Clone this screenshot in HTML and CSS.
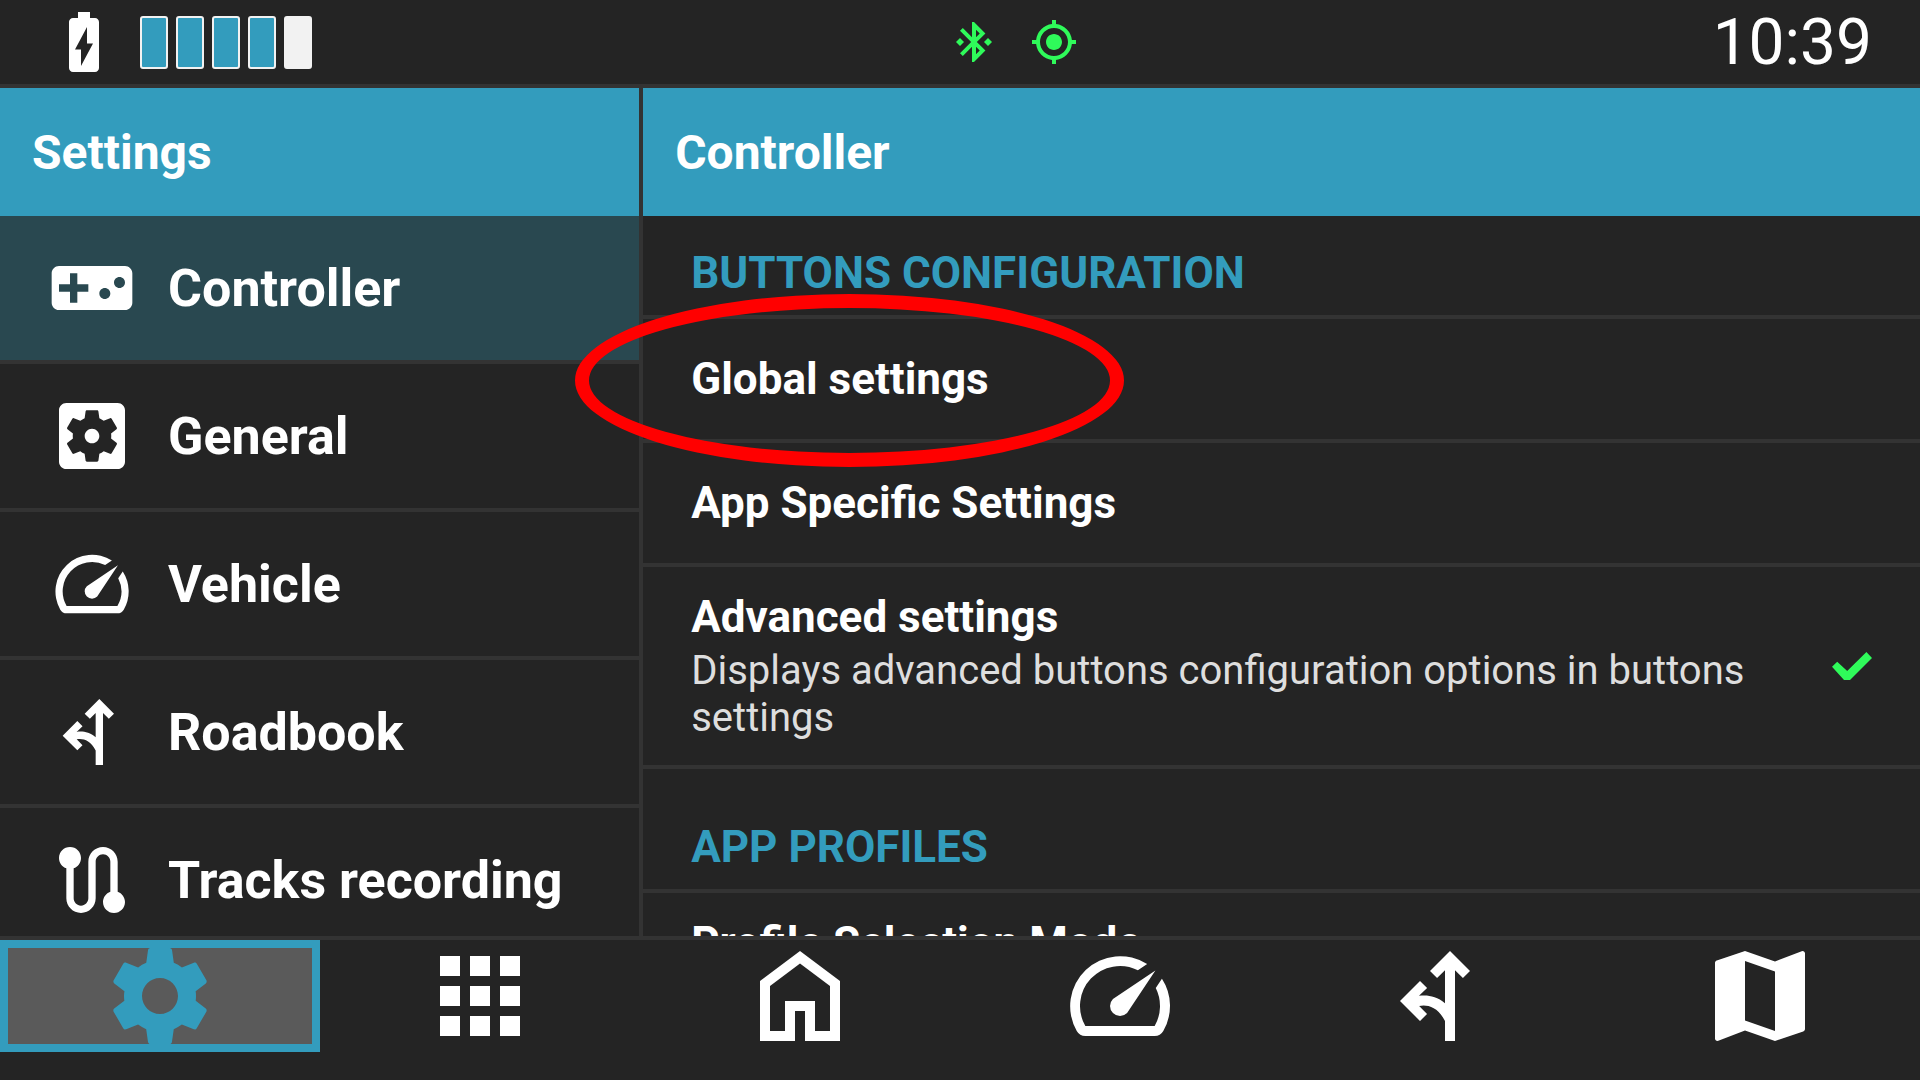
FILE: index.html
```
<!DOCTYPE html>
<html lang="en">

<head>
    <meta charset="UTF-8">
    <meta name="viewport" content="width=device-width, initial-scale=1.0">
    <title>Settings</title>
    <link rel="stylesheet" href="styles.css">
</head>

<body>
    <header class="status">
        <div class="status_left">
            <svg class="icon_battery" viewBox="0 0 24 24"><path d="M15.67 4H14V2h-4v2H8.33C7.6 4 7 4.6 7 5.33v15.33C7 21.4 7.6 22 8.33 22h7.33c.74 0 1.34-.6 1.34-1.33V5.33C17 4.6 16.4 4 15.67 4zM11 20v-5.5H9L13 7v5.5h2L11 20z"/></svg>
            <div class="level">
                <span class="on"></span>
                <span class="on"></span>
                <span class="on"></span>
                <span class="on"></span>
                <span></span>
            </div>
        </div>
        <div class="status_mid">
            <svg viewBox="0 0 24 24"><path d="M7 12l-2-2-2 2 2 2 2-2zm10.71-4.29L12 2h-1v7.59L6.41 5 5 6.41 10.59 12 5 17.59 6.41 19 11 14.41V22h1l5.71-5.71-4.3-4.29 4.3-4.29zM13 5.83l1.88 1.88L13 9.59V5.83zm1.88 10.46L13 18.17v-3.76l1.88 1.88zM19 10l-2 2 2 2 2-2-2-2z"/></svg>
            <svg viewBox="0 0 24 24"><path d="M12 8c-2.21 0-4 1.79-4 4s1.79 4 4 4 4-1.79 4-4-1.79-4-4-4zm8.94 3A8.994 8.994 0 0 0 13 3.06V1h-2v2.06A8.994 8.994 0 0 0 3.06 11H1v2h2.06A8.994 8.994 0 0 0 11 20.94V23h2v-2.06A8.994 8.994 0 0 0 20.94 13H23v-2h-2.06zM12 19c-3.87 0-7-3.13-7-7s3.13-7 7-7 7 3.13 7 7-3.13 7-7 7z"/></svg>
        </div>
        <div class="time">10:39</div>
    </header>

    <div class="container">
        <aside class="side">
            <h1 class="title">Settings</h1>
            <ul class="menu">
                <li>
                    <a href="#controller" class="active">
                        <svg viewBox="0 0 24 24"><path d="M21 6H3c-1.1 0-2 .9-2 2v8c0 1.1.9 2 2 2h18c1.1 0 2-.9 2-2V8c0-1.1-.9-2-2-2zm-10 7H8v3H6v-3H3v-2h3V8h2v3h3v2zm4.5 2c-.83 0-1.5-.67-1.5-1.5s.67-1.5 1.5-1.5 1.5.67 1.5 1.5-.67 1.5-1.5 1.5zm4-3c-.83 0-1.5-.67-1.5-1.5S18.67 9 19.5 9s1.5.67 1.5 1.5-.67 1.5-1.5 1.5z"/></svg>
                        <span>Controller</span>
                    </a>
                </li>
                <li>
                    <a href="#general">
                        <svg viewBox="0 0 24 24"><path d="M12 10c-1.1 0-2 .9-2 2s.9 2 2 2 2-.9 2-2-.9-2-2-2zm7-7H5c-1.11 0-2 .9-2 2v14c0 1.1.89 2 2 2h14c1.11 0 2-.9 2-2V5c0-1.1-.89-2-2-2zm-1.75 9c0 .23-.02.46-.05.68l1.48 1.16c.13.11.17.3.08.45l-1.4 2.42c-.09.15-.27.21-.43.15l-1.74-.7c-.36.28-.76.51-1.18.69l-.26 1.85c-.03.17-.18.3-.35.3h-2.8c-.17 0-.32-.13-.35-.29l-.26-1.85c-.43-.18-.82-.41-1.18-.69l-1.74.7c-.16.06-.34 0-.43-.15l-1.4-2.42c-.09-.15-.05-.34.08-.45l1.48-1.16c-.03-.23-.05-.46-.05-.69 0-.23.02-.46.05-.68l-1.48-1.16c-.13-.11-.17-.3-.08-.45l1.4-2.42c.09-.15.27-.21.43-.15l1.74.7c.36-.28.76-.51 1.18-.69l.26-1.85c.03-.17.18-.3.35-.3h2.8c.17 0 .32.13.35.29l.26 1.85c.43.18.82.41 1.18.69l1.74-.7c.16-.06.34 0 .43.15l1.4 2.42c.09.15.05.34-.08.45l-1.48 1.16c.03.23.05.46.05.69z"/></svg>
                        <span>General</span>
                    </a>
                </li>
                <li>
                    <a href="#vehicle">
                        <svg viewBox="0 0 24 24"><path d="M20.38 8.57l-1.23 1.85a8 8 0 0 1-.22 7.58H5.07A8 8 0 0 1 15.58 6.85l1.85-1.23A10 10 0 0 0 3.35 19a2 2 0 0 0 1.72 1h13.85a2 2 0 0 0 1.74-1 10 10 0 0 0-.27-10.44zm-9.79 6.84a2 2 0 0 0 2.83 0l5.66-8.49-8.49 5.66a2 2 0 0 0 0 2.83z"/></svg>
                        <span>Vehicle</span>
                    </a>
                </li>
                <li>
                    <a href="#roadbook">
                        <svg viewBox="0 0 24 24"><path d="M9.41 15.59L7.83 14c1.51-.33 3.73.08 5.17 3.02V21h2V6.83l1.59 1.59L18 7l-4-4-4 4 1.41 1.41L13 6.83v6.63c-1.75-1.58-3.79-1.73-5.2-1.49l1.62-1.57L8 9l-4 4 4 4 1.41-1.41z"/></svg>
                        <span>Roadbook</span>
                    </a>
                </li>
                <li>
                    <a href="#tracks">
                        <svg viewBox="0 0 24 24"><path d="M19 15.18V7c0-2.21-1.79-4-4-4s-4 1.79-4 4v10c0 1.1-.9 2-2 2s-2-.9-2-2V8.82C8.16 8.4 9 7.3 9 6c0-1.66-1.34-3-3-3S3 4.34 3 6c0 1.3.84 2.4 2 2.82V17c0 2.21 1.79 4 4 4s4-1.79 4-4V7c0-1.1.9-2 2-2s2 .9 2 2v8.18c-1.16.41-2 1.51-2 2.82 0 1.66 1.34 3 3 3s3-1.34 3-3c0-1.3-.84-2.4-2-2.82z"/></svg>
                        <span>Tracks recording</span>
                    </a>
                </li>
            </ul>
        </aside>

        <main class="content">
            <h2 class="title">Controller</h2>
            <div class="list">
                <h3 class="group">BUTTONS CONFIGURATION</h3>
                <div class="row marked">
                    <a href="#global">Global settings</a>
                    <div class="mark"></div>
                </div>
                <div class="row">
                    <a href="#app">App Specific Settings</a>
                </div>
                <div class="row row_tall">
                    <label for="advanced">
                        Advanced settings
                        <small>Displays advanced buttons configuration options in buttons settings</small>
                    </label>
                    <input type="checkbox" id="advanced" checked>
                </div>
                <h3 class="group group_next">APP PROFILES</h3>
                <div class="row row_tall">
                    <a href="#profile">Profile Selection Mode</a>
                </div>
            </div>
        </main>
    </div>

    <nav class="nav">
        <button type="button" class="active" aria-label="Settings">
            <svg viewBox="0 0 24 24"><path d="M19.14 12.94c.04-.3.06-.61.06-.94 0-.32-.02-.64-.07-.94l2.03-1.58c.18-.14.23-.41.12-.61l-1.92-3.32c-.12-.22-.37-.29-.59-.22l-2.39.96c-.5-.38-1.03-.7-1.62-.94l-.36-2.54c-.04-.24-.24-.41-.48-.41h-3.84c-.24 0-.43.17-.47.41l-.36 2.54c-.59.24-1.13.57-1.62.94l-2.39-.96c-.22-.08-.47 0-.59.22L2.74 8.87c-.12.21-.08.47.12.61l2.03 1.58c-.05.3-.09.63-.09.94s.02.64.07.94l-2.03 1.58c-.18.14-.23.41-.12.61l1.92 3.32c.12.22.37.29.59.22l2.39-.96c.5.38 1.03.7 1.62.94l.36 2.54c.05.24.24.41.48.41h3.84c.24 0 .44-.17.47-.41l.36-2.54c.59-.24 1.13-.56 1.62-.94l2.39.96c.22.08.47 0 .59-.22l1.92-3.32c.12-.22.07-.47-.12-.61l-2.01-1.58zM12 15.6c-1.98 0-3.6-1.62-3.6-3.6s1.62-3.6 3.6-3.6 3.6 1.62 3.6 3.6-1.62 3.6-3.6 3.6z"/></svg>
        </button>
        <button type="button" aria-label="Apps">
            <svg viewBox="0 0 24 24"><path d="M4 8h4V4H4v4zm6 12h4v-4h-4v4zm-6 0h4v-4H4v4zm0-6h4v-4H4v4zm6 0h4v-4h-4v4zm6-10v4h4V4h-4zm-6 4h4V4h-4v4zm6 6h4v-4h-4v4zm0 6h4v-4h-4v4z"/></svg>
        </button>
        <button type="button" aria-label="Home">
            <svg viewBox="0 0 24 24"><path d="M12 5.5l6 4.5v9h-3v-6H9v6H6v-9l6-4.5M12 3L4 9v12h7v-6h2v6h7V9l-8-6z"/></svg>
        </button>
        <button type="button" aria-label="Vehicle">
            <svg viewBox="0 0 24 24"><path d="M20.38 8.57l-1.23 1.85a8 8 0 0 1-.22 7.58H5.07A8 8 0 0 1 15.58 6.85l1.85-1.23A10 10 0 0 0 3.35 19a2 2 0 0 0 1.72 1h13.85a2 2 0 0 0 1.74-1 10 10 0 0 0-.27-10.44zm-9.79 6.84a2 2 0 0 0 2.83 0l5.66-8.49-8.49 5.66a2 2 0 0 0 0 2.83z"/></svg>
        </button>
        <button type="button" aria-label="Roadbook">
            <svg viewBox="0 0 24 24"><path d="M9.41 15.59L7.83 14c1.51-.33 3.73.08 5.17 3.02V21h2V6.83l1.59 1.59L18 7l-4-4-4 4 1.41 1.41L13 6.83v6.63c-1.75-1.58-3.79-1.73-5.2-1.49l1.62-1.57L8 9l-4 4 4 4 1.41-1.41z"/></svg>
        </button>
        <button type="button" aria-label="Map">
            <svg viewBox="0 0 24 24"><path d="M20.5 3l-.16.03L15 5.1 9 3 3.36 4.9c-.21.07-.36.25-.36.48V20.5c0 .28.22.5.5.5l.16-.03L9 18.9l6 2.1 5.64-1.9c.21-.07.36-.25.36-.48V3.5c0-.28-.22-.5-.5-.5zM15 19l-6-2.11V5l6 2.11V19z"/></svg>
        </button>
    </nav>
</body>

</html>
```
FILE: styles.css
```
* {
    margin: 0;
    padding: 0;
    box-sizing: border-box;
}

a {
    color: inherit;
    text-decoration: none;
}

ul,
li {
    list-style: none;
}

svg {
    display: block;
    flex: none;
    fill: currentColor;
}

body {
    height: 100vh;
    display: flex;
    flex-direction: column;
    overflow: hidden;
    background-color: #242424;
    color: #fff;
    font-family: Roboto, sans-serif;
}

/* status bar */
.status {
    flex: none;
    height: 88px;
    display: grid;
    grid-template-columns: 49.5vw auto 1fr;
    align-items: center;
    padding-right: 48px;
    border-bottom: 4px solid #333;
}

.status_left {
    display: flex;
    align-items: center;
    gap: 20px;
    padding-left: 48px;
}

.icon_battery {
    width: 72px;
    height: 72px;
}

.level {
    display: flex;
    gap: 8px;
}

.level span {
    width: 28px;
    height: 53px;
    border: 2px solid #f2f2f2;
    border-radius: 3px;
    background-color: #f2f2f2;
}

.level .on {
    background-color: #339cbd;
}

.status_mid {
    display: flex;
    gap: 32px;
    color: #2ffa5a;
}

.status_mid svg {
    width: 48px;
    height: 48px;
}

.time {
    padding-top: 2px;
    text-align: right;
    font-size: 64px;
    line-height: 82px;
}

/* two panes */
.container {
    flex: 1;
    min-height: 0;
    display: flex;
    border-bottom: 4px solid #333;
}

.side,
.content {
    display: flex;
    flex-direction: column;
}

.side {
    flex: 0 0 33.5%;
    border-right: 4px solid #333;
}

.content {
    flex: 1;
    min-width: 0;
}

.title {
    flex: none;
    padding: 2px 32px 0;
    background-color: #339cbd;
    font-size: 48px;
    line-height: 126px;
}

.menu {
    flex: 1;
    overflow: hidden;
}

.menu li {
    border-bottom: 4px solid #333;
}

.menu a {
    height: 144px;
    display: flex;
    align-items: center;
    gap: 32px;
    padding: 0 48px;
    font-size: 52px;
    font-weight: bold;
    white-space: nowrap;
}

.menu .active {
    background-color: #294850;
}

.menu svg {
    width: 88px;
    height: 88px;
}

/* the mark reaches over the left pane, so only the height is clipped */
.list {
    flex: 1;
    min-height: 0;
    overflow-x: visible;
    overflow-y: clip;
}

.group {
    padding: 31px 48px 16px;
    border-bottom: 4px solid #333;
    color: #339cbd;
    font-size: 44px;
    line-height: 52px;
}

.group_next {
    padding-top: 52px;
}

.row {
    min-height: 124px;
    display: flex;
    align-items: center;
    justify-content: space-between;
    gap: 48px;
    padding: 0 48px;
    border-bottom: 4px solid #333;
    font-size: 44px;
    font-weight: bold;
    line-height: 52px;
}

.row_tall {
    padding-top: 24px;
    padding-bottom: 24px;
}

.row_tall label,
.row_tall a {
    align-self: flex-start;
}

.row small {
    display: block;
    margin-top: 4px;
    color: #dedede;
    font-size: 40px;
    font-weight: normal;
    line-height: 47px;
}

.row input {
    flex: none;
    appearance: none;
    width: 40px;
    height: 28px;
    background-color: #5a5a5a;
    clip-path: polygon(0 53%, 13% 35%, 38% 68%, 86% 0, 100% 21%, 45% 100%, 30% 100%);
}

.row input:checked {
    background-color: #2ffa5a;
}

.marked {
    position: relative;
}

.mark {
    position: absolute;
    left: -68px;
    top: -25px;
    z-index: 1;
    width: 549px;
    height: 173px;
    border: 14px solid #f00;
    border-radius: 50%;
    pointer-events: none;
}

/* bottom bar */
.nav {
    flex: none;
    display: grid;
    grid-template-columns: repeat(6, 1fr);
    padding-bottom: 28px;
}

.nav button {
    height: 112px;
    display: flex;
    align-items: center;
    justify-content: center;
    border: 8px solid transparent;
    background: none;
    color: #fff;
    cursor: pointer;
}

.nav .active {
    border-color: #339cbd;
    background-color: #5a5a5a;
    color: #339cbd;
}

.nav svg {
    width: 120px;
    height: 120px;
}
```
